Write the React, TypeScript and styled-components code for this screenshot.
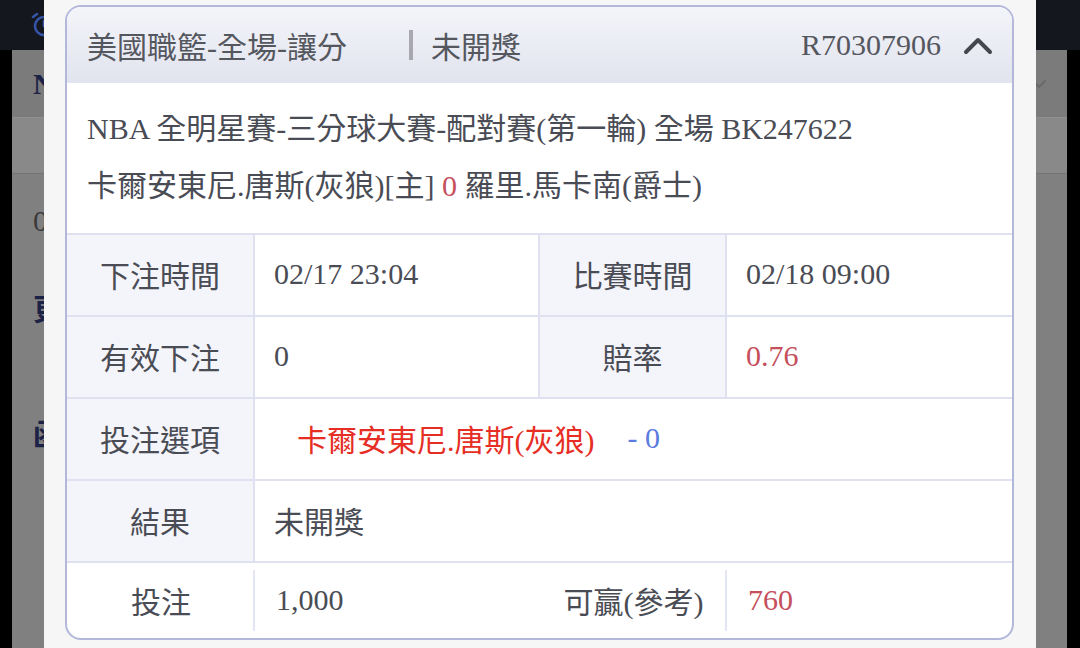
import React from 'react';
import styled, { createGlobalStyle } from 'styled-components';

const GlobalStyle = createGlobalStyle`
  html, body {
    margin: 0;
    padding: 0;
    background: #000;
  }

  body {
    font-family: "Liberation Serif", "Noto Sans CJK TC", serif;
  }
`;

const Screen = styled.div`
  position: relative;
  width: 1080px;
  height: 648px;
  overflow: hidden;
  display: flex;
  flex-direction: column;
  background: #000;
`;

const TopBar = styled.div`
  height: 50px;
  flex-shrink: 0;
  background: #15171f;
  display: flex;
  align-items: center;
  padding-left: 29px;
`;

const Backdrop = styled.div`
  flex: 1;
  margin: 0 13px 0 12px;
  background: #808080;
  display: flex;
  flex-direction: column;
`;

const PageTitle = styled.div`
  height: 68px;
  box-sizing: border-box;
  padding: 0 20px 0 21px;
  background: #7b7b7b;
  border-bottom: 1px solid #8f8f8f;
  display: flex;
  align-items: center;
  justify-content: space-between;
  font-size: 30px;
  font-weight: 700;
  color: #1c2246;
`;

const TabBand = styled.div`
  height: 55px;
  flex-shrink: 0;
  background: #898989;
  border-bottom: 1px solid #747474;
`;

const ListLine = styled.div<{ $top: number; $navy?: boolean }>`
  margin-top: ${p => p.$top}px;
  padding-left: 21px;
  font-size: 30px;
  line-height: 34px;
  color: ${p => (p.$navy ? '#1c2246' : '#3a3a3a')};
  font-weight: ${p => (p.$navy ? 700 : 400)};
`;

const Modal = styled.div`
  position: absolute;
  top: 0;
  left: 44px;
  width: 992px;
  height: 648px;
  box-sizing: border-box;
  padding: 5px 22px 0 21px;
  background: #f6f6f6;
`;

const Card = styled.div`
  border: 2px solid #b3b8db;
  border-radius: 16px;
  overflow: hidden;
  background: #fff;
  color: #4a4c55;
  font-size: 30px;
`;

const CardHeader = styled.div`
  height: 76px;
  display: flex;
  align-items: center;
  padding: 0 19px 0 20px;
  background: linear-gradient(#f4f5fa, #e1e3ee);
  color: #55575f;
`;

const HeaderTitle = styled.span`
  width: 322px;
`;

const HeaderSep = styled.span`
  width: 4px;
  height: 30px;
  margin-right: 18px;
  background: #a8a9ae;
`;

const HeaderStatus = styled.span`
  flex: 1;
`;

const OrderNo = styled.span`
  margin-right: 22px;
`;

const Info = styled.div`
  padding: 17px 20px 19px;
  line-height: 57px;
  white-space: nowrap;
`;

const Red = styled.span<{ $bright?: boolean }>`
  color: ${p => (p.$bright ? '#e62e25' : '#c5505c')};
`;

const Blue = styled.span`
  color: #5b7be0;
  margin-left: 33px;
`;

const Table = styled.div`
  display: grid;
  grid-template-columns: 188px 285px 187px 1fr;
  border-top: 2px solid #dfe1f0;
`;

const Cell = styled.div<{ $label?: boolean; $span?: number; $last?: boolean; $pad?: number }>`
  height: 80px;
  display: flex;
  align-items: center;
  justify-content: ${p => (p.$label ? 'center' : 'flex-start')};
  padding-left: ${p => (p.$label ? 0 : p.$pad ?? 19)}px;
  padding-bottom: 3px;
  box-sizing: border-box;
  grid-column: span ${p => p.$span ?? 1};
  background: ${p => (p.$label ? '#f4f5fa' : '#fff')};
  border-bottom: 2px solid #dfe1f0;
  border-right: ${p => (p.$last ? 'none' : '2px solid #dfe1f0')};
  white-space: nowrap;
  height: 82px;
`;

const FootCell = styled.div<{ $label?: boolean; $divided?: boolean }>`
  position: relative;
  height: 75px;
  display: flex;
  align-items: center;
  justify-content: ${p => (p.$label ? 'center' : 'flex-start')};
  padding-left: ${p => (p.$label ? 0 : 21)}px;
  padding-bottom: 2px;
  box-sizing: border-box;
  white-space: nowrap;

  &::after {
    content: '';
    display: ${p => (p.$divided ? 'block' : 'none')};
    position: absolute;
    right: 0;
    top: 7px;
    bottom: 7px;
    width: 2px;
    background: #e3e5f2;
  }
`;

const ClockIcon = () => (
  <svg width="30" height="30" viewBox="0 0 30 30" fill="none" stroke="#3454a8" strokeWidth="2.6" strokeLinecap="round">
    <circle cx="15" cy="16" r="9" />
    <path d="M15 11v5l3 2" />
    <path d="M4 7l4-3M26 7l-4-3" />
  </svg>
);

const SmallChevron = () => (
  <svg width="16" height="10" viewBox="0 0 16 10" fill="none" stroke="#6a6a6a" strokeWidth="2" strokeLinecap="round">
    <path d="M2 2l6 6 6-6" />
  </svg>
);

const ChevronUp = () => (
  <svg width="30" height="20" viewBox="0 0 30 20" fill="none" stroke="#45474f" strokeWidth="4" strokeLinecap="round" strokeLinejoin="round">
    <path d="M3 17L15 5l12 12" />
  </svg>
);

export default function App() {
  return (
    <Screen>
      <GlobalStyle />
      <TopBar>
        <ClockIcon />
      </TopBar>
      <Backdrop>
        <PageTitle>
          <span>NBA</span>
          <SmallChevron />
        </PageTitle>
        <TabBand />
        <ListLine $top={30}>02/17</ListLine>
        <ListLine $top={55} $navy>更</ListLine>
        <ListLine $top={91} $navy>函</ListLine>
      </Backdrop>

      <Modal>
        <Card>
          <CardHeader>
            <HeaderTitle>美國職籃-全場-讓分</HeaderTitle>
            <HeaderSep />
            <HeaderStatus>未開獎</HeaderStatus>
            <OrderNo>R70307906</OrderNo>
            <ChevronUp />
          </CardHeader>

          <Info>
            <div>NBA 全明星賽-三分球大賽-配對賽(第一輪) 全場 BK247622</div>
            <div>
              卡爾安東尼.唐斯(灰狼)[主] <Red>0</Red> 羅里.馬卡南(爵士)
            </div>
          </Info>

          <Table>
            <Cell $label>下注時間</Cell>
            <Cell>02/17 23:04</Cell>
            <Cell $label>比賽時間</Cell>
            <Cell $last>02/18 09:00</Cell>

            <Cell $label>有效下注</Cell>
            <Cell>0</Cell>
            <Cell $label>賠率</Cell>
            <Cell $last>
              <Red>0.76</Red>
            </Cell>

            <Cell $label>投注選項</Cell>
            <Cell $span={3} $last $pad={42}>
              <Red $bright>卡爾安東尼.唐斯(灰狼)</Red>
              <Blue>- 0</Blue>
            </Cell>

            <Cell $label>結果</Cell>
            <Cell $span={3} $last>未開獎</Cell>

            <FootCell $label $divided>投注</FootCell>
            <FootCell>1,000</FootCell>
            <FootCell $label $divided>可贏(參考)</FootCell>
            <FootCell>
              <Red>760</Red>
            </FootCell>
          </Table>
        </Card>
      </Modal>
    </Screen>
  );
}
